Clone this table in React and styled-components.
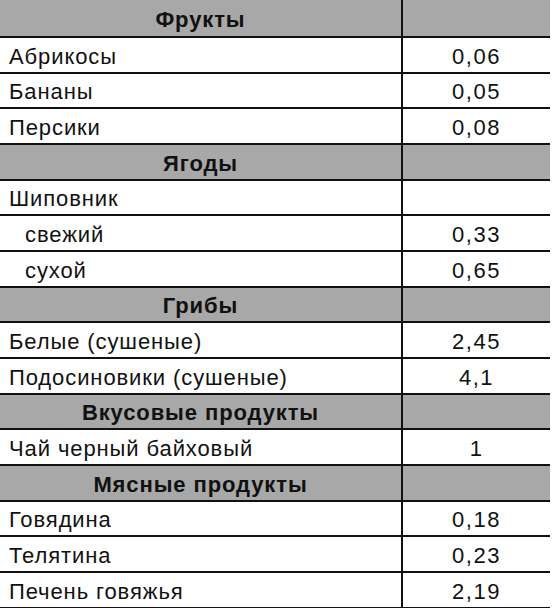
import React from "react";
import styled, { createGlobalStyle } from "styled-components";

const Global = createGlobalStyle`
  html, body { margin: 0; padding: 0; background: #fff; }
  body { font-family: "Liberation Sans", Arial, sans-serif; color: #111; }
`;

const Table = styled.div`
  width: 550px;
  display: grid;
  grid-template-columns: 403px 147px;
`;

const Row = styled.div`
  display: contents;
`;

const Cell = styled.div`
  box-sizing: border-box;
  height: ${(p) => (p.$first ? "38px" : "35.67px")};
  border-bottom: 2px solid #111;
  background: ${(p) => (p.$head ? "#a8a8a8" : "#fff")};
  display: flex;
  align-items: center;
  font-size: 22px;
  letter-spacing: 0.9px;
  line-height: 1;
  padding-top: 4px;
`;

const NameCell = styled(Cell)`
  border-right: 2px solid #111;
  justify-content: ${(p) => (p.$head ? "center" : "flex-start")};
  padding-left: ${(p) => (p.$head ? "0" : p.$indent ? "25px" : "9px")};
  font-weight: ${(p) => (p.$head ? 700 : 400)};
`;

const ValueCell = styled(Cell)`
  justify-content: center;
  letter-spacing: 1.5px;
`;

const data = [
  { h: "Фрукты" },
  { n: "Абрикосы", v: "0,06" },
  { n: "Бананы", v: "0,05" },
  { n: "Персики", v: "0,08" },
  { h: "Ягоды" },
  { n: "Шиповник", v: "" },
  { n: "свежий", v: "0,33", i: true },
  { n: "сухой", v: "0,65", i: true },
  { h: "Грибы" },
  { n: "Белые (сушеные)", v: "2,45" },
  { n: "Подосиновики (сушеные)", v: "4,1" },
  { h: "Вкусовые продукты" },
  { n: "Чай черный байховый", v: "1" },
  { h: "Мясные продукты" },
  { n: "Говядина", v: "0,18" },
  { n: "Телятина", v: "0,23" },
  { n: "Печень говяжья", v: "2,19" },
];

export default function App() {
  return (
    <>
      <Global />
      <Table>
        {data.map((r, k) => (
          <Row key={k}>
            <NameCell $head={!!r.h} $indent={r.i} $first={k === 0}>
              {r.h || r.n}
            </NameCell>
            <ValueCell $head={!!r.h} $first={k === 0}>
              {r.h ? "" : r.v}
            </ValueCell>
          </Row>
        ))}
      </Table>
    </>
  );
}
